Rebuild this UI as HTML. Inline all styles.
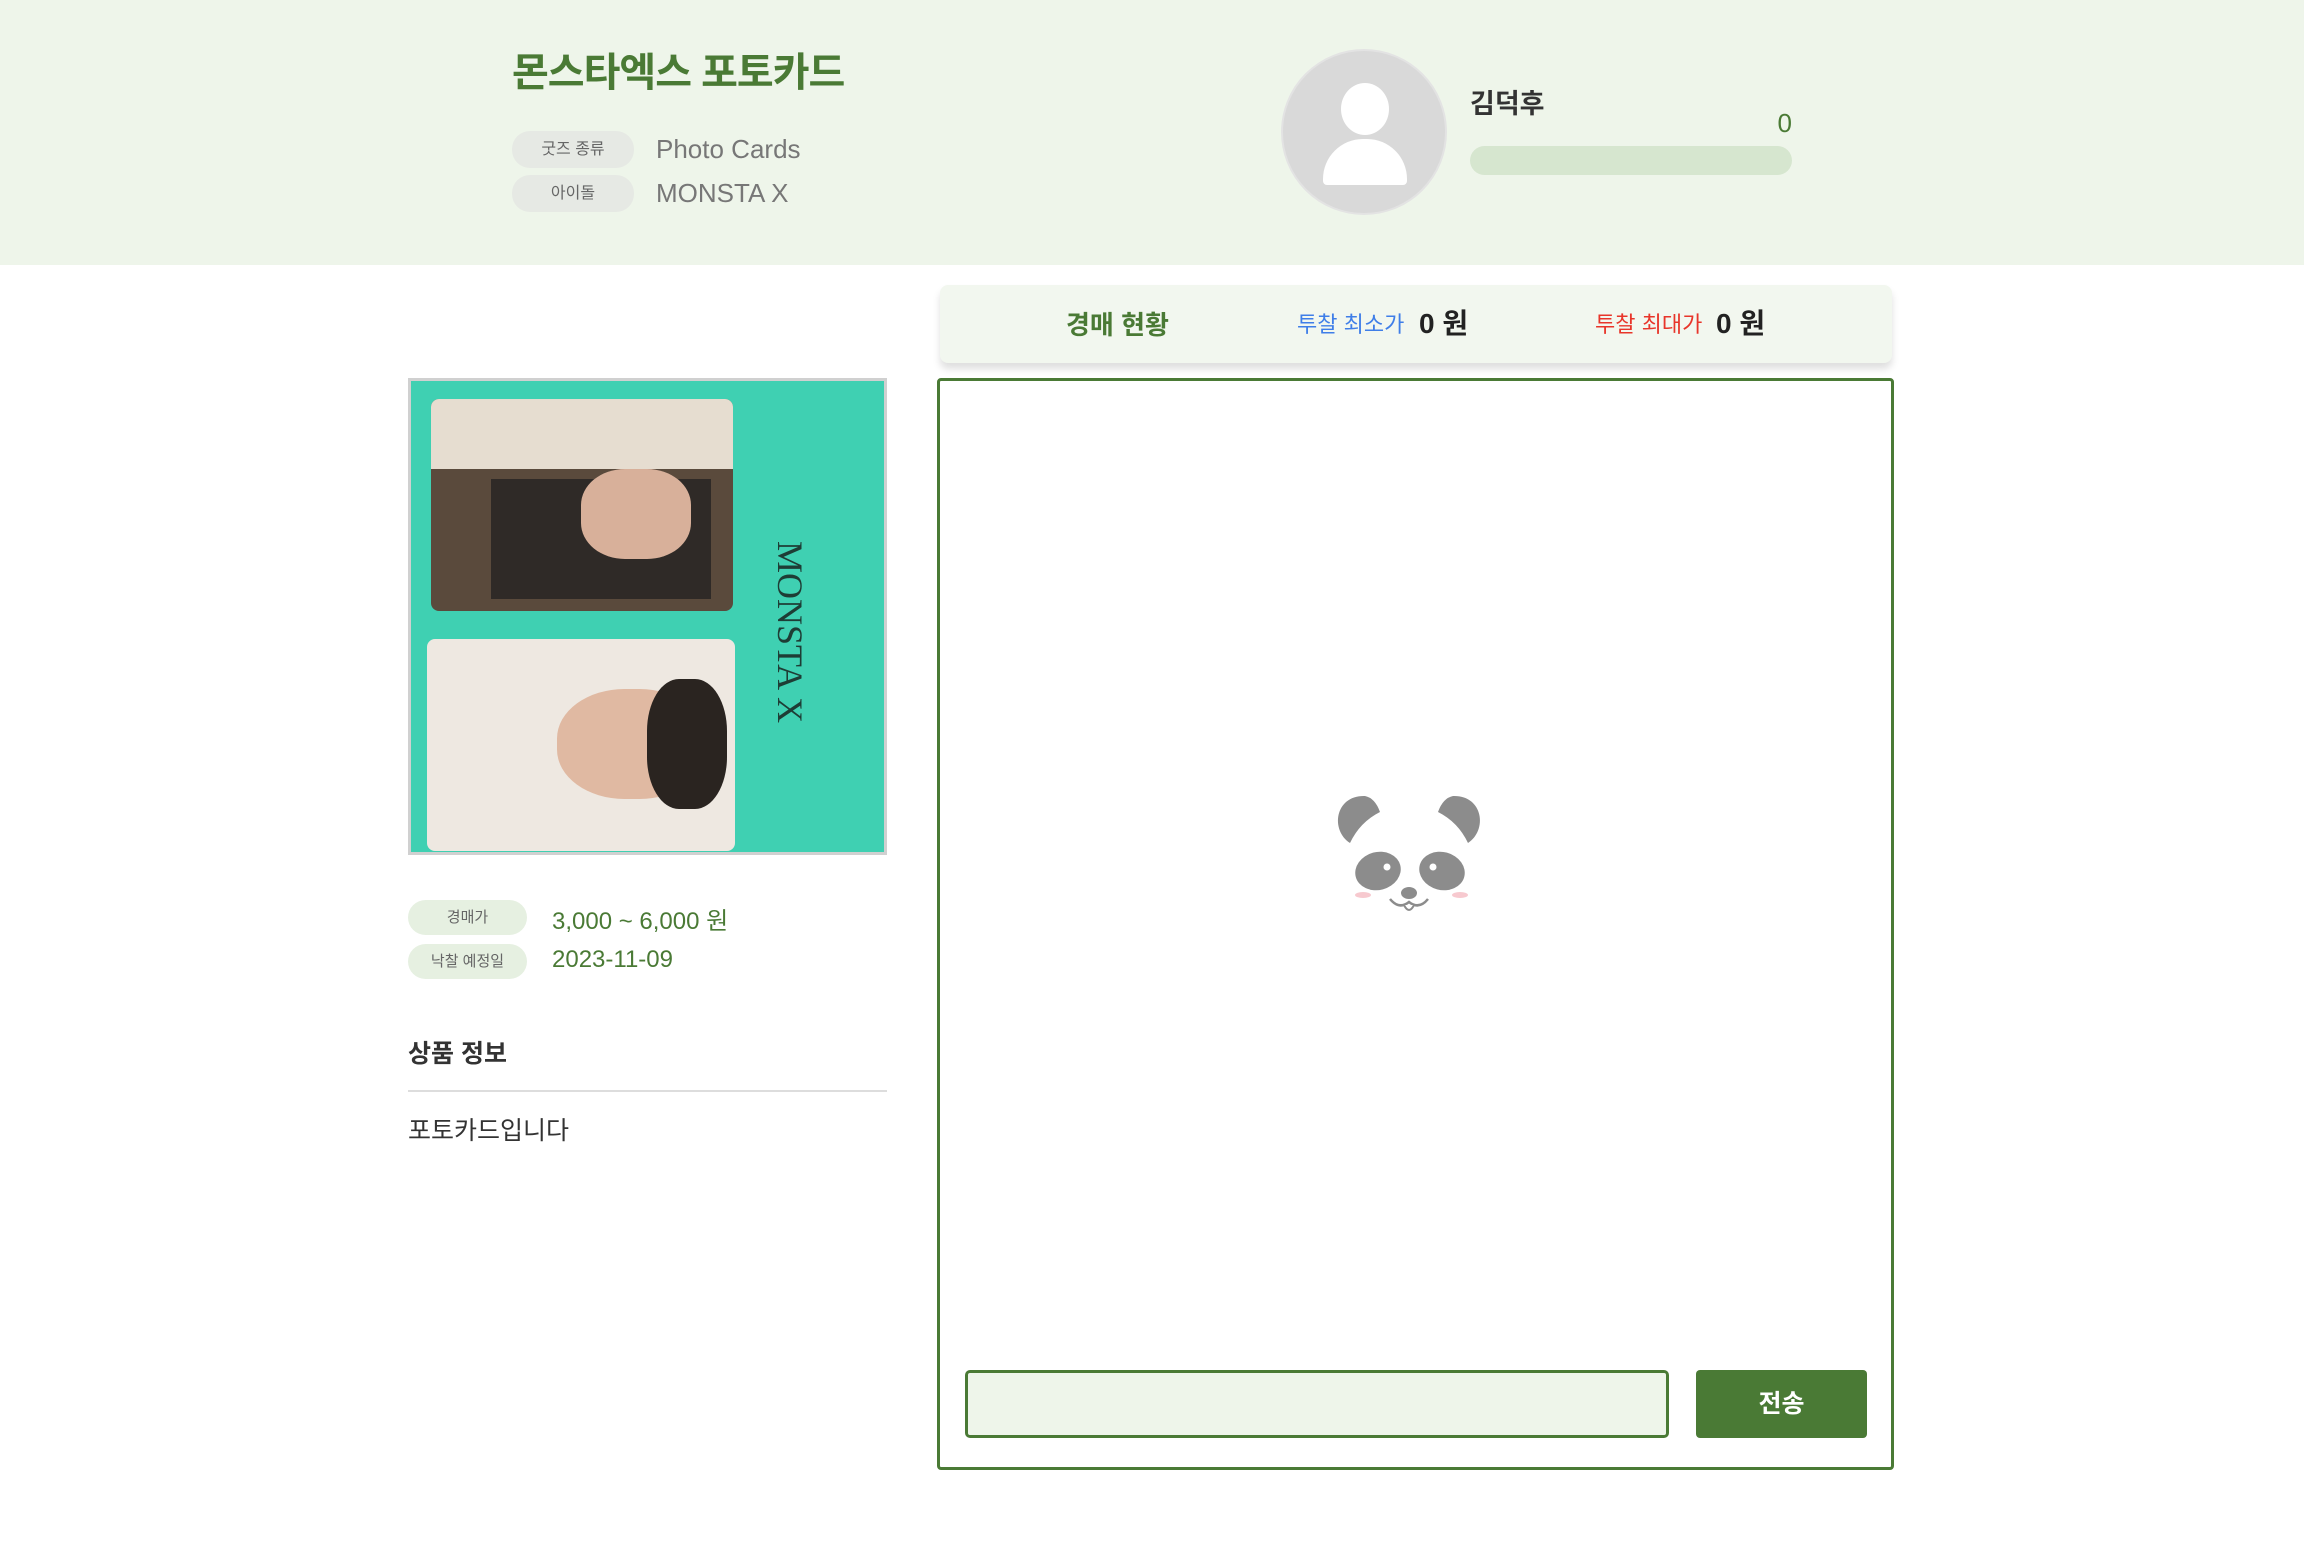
<!DOCTYPE html>
<html><head><meta charset="utf-8"><style>
*{margin:0;padding:0;box-sizing:border-box}
body{width:2308px;height:1544px;background:#fff;font-family:"Liberation Sans","Noto Sans CJK KR",sans-serif;position:relative;overflow:hidden}
.a{position:absolute}
.pill{position:absolute;background:#e9ebe8;border-radius:18px;color:#666;font-size:16px;text-align:center}
</style></head><body>
<div class="a" style="left:0;top:0;width:2304px;height:265px;background:#eef5ea"></div>
<div class="a" style="left:512px;top:40px;font-size:40px;font-weight:bold;color:#4a7a35;letter-spacing:-1px">몬스타엑스 포토카드</div>
<div class="pill" style="left:512px;top:131px;width:122px;height:37px;line-height:37px;background:#e6e9e4">굿즈 종류</div>
<div class="a" style="left:656px;top:134px;font-size:26px;color:#777">Photo Cards</div>
<div class="pill" style="left:512px;top:175px;width:122px;height:37px;line-height:37px;background:#e6e9e4">아이돌</div>
<div class="a" style="left:656px;top:178px;font-size:26px;color:#777">MONSTA X</div>
<div class="a" style="left:1281px;top:49px;width:166px;height:166px;border-radius:50%;background:#d9d9d9;border:2px solid #e3e3e3;overflow:hidden">
 <div class="a" style="left:58px;top:32px;width:48px;height:52px;border-radius:50%;background:#fff"></div>
 <div class="a" style="left:40px;top:88px;width:84px;height:46px;border-radius:40px 40px 4px 4px;background:#fff"></div>
</div>
<div class="a" style="left:1470px;top:82px;font-size:27px;font-weight:bold;color:#333">김덕후</div>
<div class="a" style="left:1760px;top:108px;width:32px;text-align:right;font-size:26px;color:#4a7a35">0</div>
<div class="a" style="left:1470px;top:146px;width:322px;height:29px;border-radius:15px;background:#d6e6cf"></div>

<div class="a" style="left:940px;top:285px;width:952px;height:78px;background:#f2f7ef;border-radius:8px;box-shadow:0 6px 8px rgba(0,0,0,.13)"></div>
<div class="a" style="left:1066px;top:305px;font-size:26px;font-weight:bold;color:#4a7a35">경매 현황</div>
<div class="a" style="left:1297px;top:307px;font-size:22px;color:#3f7ee8">투찰 최소가</div>
<div class="a" style="left:1419px;top:302px;font-size:28px;font-weight:bold;color:#222">0 원</div>
<div class="a" style="left:1595px;top:307px;font-size:22px;color:#e8352a">투찰 최대가</div>
<div class="a" style="left:1716px;top:302px;font-size:28px;font-weight:bold;color:#222">0 원</div>

<div class="a" style="left:408px;top:378px;width:479px;height:477px;background:#3fd0b2;border:3px solid #d0d0d0;overflow:hidden">
 <div class="a" style="left:20px;top:18px;width:302px;height:212px;background:#5a4a3c;border-radius:8px">
  <div class="a" style="left:0;top:0;width:302px;height:70px;background:#e6ddd0;border-radius:8px 8px 0 0"></div>
  <div class="a" style="left:60px;top:80px;width:220px;height:120px;background:#2f2a27"></div>
  <div class="a" style="left:150px;top:70px;width:110px;height:90px;background:#d8b09a;border-radius:40%"></div>
 </div>
 <div class="a" style="left:16px;top:258px;width:308px;height:212px;background:#eee8e1;border-radius:8px">
  <div class="a" style="left:130px;top:50px;width:150px;height:110px;background:#e0b9a2;border-radius:45%"></div>
  <div class="a" style="left:220px;top:40px;width:80px;height:130px;background:#2a2420;border-radius:40%"></div>
 </div>
 <div class="a" style="left:400px;top:160px;font-family:'Liberation Serif',serif;font-size:36px;color:#1e3d35;transform:rotate(90deg);transform-origin:left top;white-space:nowrap">MONSTA X</div>
</div>

<div class="pill" style="left:408px;top:900px;width:119px;height:35px;line-height:35px;background:#e6f0e1;font-size:15px">경매가</div>
<div class="a" style="left:552px;top:901px;font-size:24px;color:#4a7a35">3,000 ~ 6,000 원</div>
<div class="pill" style="left:408px;top:944px;width:119px;height:35px;line-height:35px;background:#e6f0e1;font-size:15px">낙찰 예정일</div>
<div class="a" style="left:552px;top:946px;font-size:24px;color:#4a7a35">2023-11-09</div>
<div class="a" style="left:408px;top:1034px;font-size:25px;font-weight:bold;color:#333">상품 정보</div>
<div class="a" style="left:408px;top:1090px;width:479px;height:2px;background:#ddd"></div>
<div class="a" style="left:408px;top:1111px;font-size:25px;color:#333">포토카드입니다</div>

<div class="a" style="left:937px;top:378px;width:957px;height:1092px;border:3px solid #4a7a35;border-radius:4px"></div>
<svg class="a" style="left:1300px;top:760px" width="220" height="180" viewBox="0 0 220 180">
 <path d="M50 83 C30 70 35 35 65 36 Q75 38 80 52 Q60 62 50 83Z" fill="#8c8c8c"/>
 <path d="M168 83 C188 70 183 35 153 36 Q143 38 138 52 Q158 62 168 83Z" fill="#8c8c8c"/>
 <ellipse cx="78" cy="111" rx="23" ry="19" transform="rotate(-15 78 111)" fill="#8c8c8c"/>
 <ellipse cx="142" cy="111" rx="23" ry="19" transform="rotate(15 142 111)" fill="#8c8c8c"/>
 <circle cx="87" cy="107" r="3.5" fill="#fff"/><circle cx="133" cy="107" r="3.5" fill="#fff"/>
 <ellipse cx="63" cy="135" rx="8" ry="3" fill="#f7c9cf"/><ellipse cx="160" cy="135" rx="8" ry="3" fill="#f7c9cf"/>
 <ellipse cx="109" cy="133" rx="8" ry="6" fill="#8c8c8c"/>
 <path d="M90 139 Q99 150 109 142 Q119 150 128 139" fill="none" stroke="#8c8c8c" stroke-width="2.5"/>
 <path d="M104 145 Q109 155 114 145" fill="#fff" stroke="#8c8c8c" stroke-width="2"/>
</svg>
<div class="a" style="left:965px;top:1370px;width:704px;height:68px;background:#eef5ea;border:3px solid #4a7a35;border-radius:5px"></div>
<div class="a" style="left:1696px;top:1370px;width:171px;height:68px;background:#4a7a35;border-radius:4px;color:#fff;font-size:25px;font-weight:bold;text-align:center;line-height:68px">전송</div>
</body></html>
